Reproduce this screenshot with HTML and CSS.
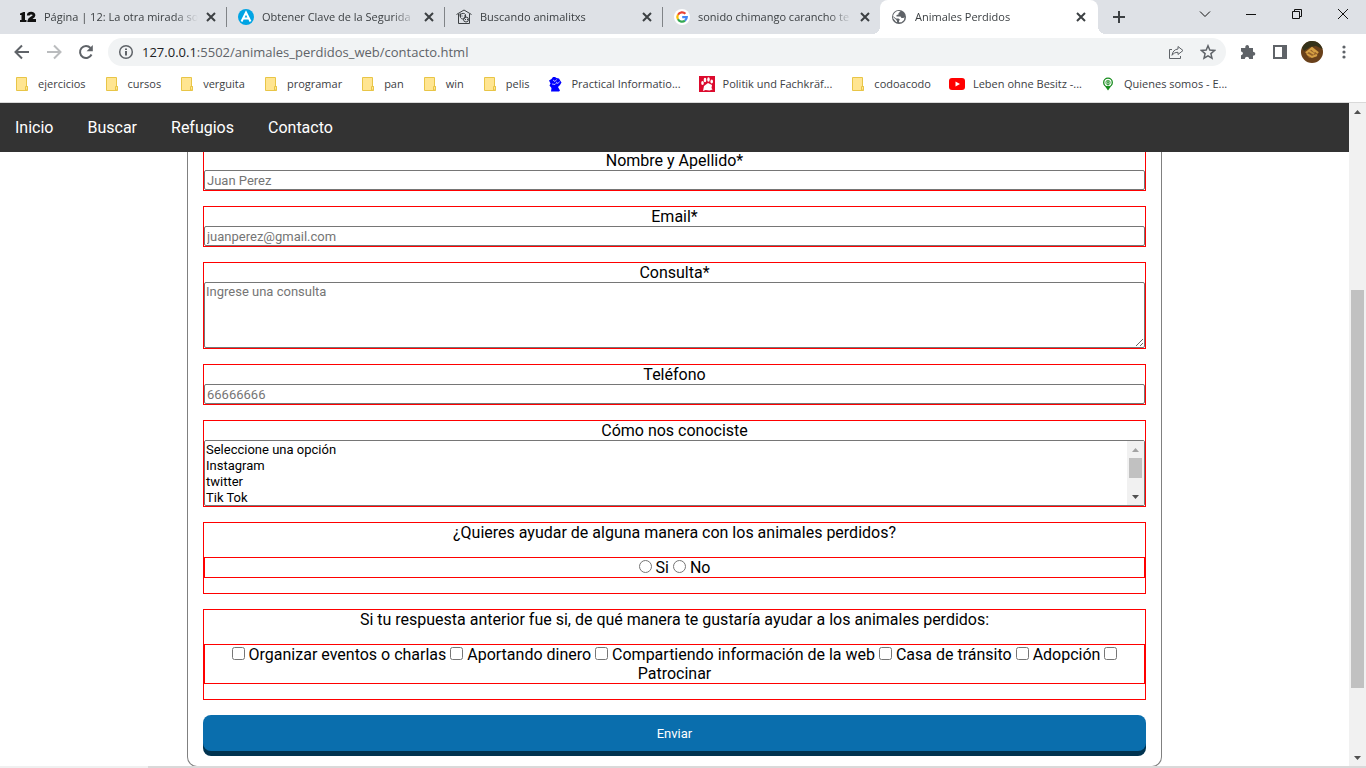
FILE: index.html
```html
<!DOCTYPE html>
<html lang="es">
<head>
<meta charset="utf-8">
<title>Animales Perdidos</title>
<link rel="stylesheet" href="styles.css">
</head>
<body>
<header class="browser">
  <div class="tabstrip">
    <div class="tab">
      <svg class="favicon" viewBox="0 0 16 16"><path fill="#111" d="M0 4.500 3.500 3H5v8h1.500v2H0v-2h1.500V6H0z"/><path fill="none" stroke="#111" stroke-width="2.800" d="M8.300 6.500c0-3 5.700-3 5.700-.3 0 2.300-4.500 2.600-5 5.300h7"/></svg>
      <button class="tab-title">Página | 12: La otra mirada so</button>
      <button class="tab-close" aria-label="Cerrar"><svg viewBox="0 0 10 10"><path d="m1 1 8 8M9 1 1 9"/></svg></button>
    </div>
    <div class="tab">
      <svg class="favicon" viewBox="0 0 16 16"><circle cx="8" cy="8" r="8" fill="#00a4e4"/><path fill="none" stroke="#fff" stroke-width="2" d="M3.500 12.500 8 3.500l4.500 9M5.500 9.500h5"/></svg>
      <button class="tab-title">Obtener Clave de la Segurida</button>
      <button class="tab-close" aria-label="Cerrar"><svg viewBox="0 0 10 10"><path d="m1 1 8 8M9 1 1 9"/></svg></button>
    </div>
    <div class="tab">
      <svg class="favicon" viewBox="0 0 16 16"><g fill="none" stroke="#3c4043"><path d="M.5 5.500 8 1l7.500 4.500M2.500 5v9.500h11V5"/><path d="M4.500 5.500c1.500-1.500 4-1.500 5 0v3c-1 2-4 2-5 0z"/><circle cx="10" cy="10.500" r="2.500"/></g><path fill="#3c4043" d="M5.500 6.500h1v1h-1zM8 6.500h1v1H8zM9 10h1v1H9zM11 10h1v1h-1zM3.500 4.500h1.500v3H3.500z"/></svg>
      <button class="tab-title">Buscando animalitxs</button>
      <button class="tab-close" aria-label="Cerrar"><svg viewBox="0 0 10 10"><path d="m1 1 8 8M9 1 1 9"/></svg></button>
    </div>
    <div class="tab tab-last">
      <svg class="favicon" viewBox="0 0 16 16"><circle cx="8" cy="8" r="8" fill="#fff"/><g fill="none" stroke-width="2.200"><path stroke="#ea4335" d="M4 5.700A4.700 4.700 0 0 1 11.400 4.800"/><path stroke="#fbbc05" d="M4 5.600a4.700 4.700 0 0 0 0 4.800"/><path stroke="#34a853" d="M4 10.300a4.700 4.700 0 0 0 7 1.400"/><path stroke="#4285f4" d="M8.200 8.100h4.600a4.700 4.700 0 0 1-1.800 3.600"/></g></svg>
      <button class="tab-title">sonido chimango carancho te</button>
      <button class="tab-close" aria-label="Cerrar"><svg viewBox="0 0 10 10"><path d="m1 1 8 8M9 1 1 9"/></svg></button>
    </div>
    <div class="tab tab-active">
      <svg class="favicon" viewBox="0 0 16 16"><circle cx="8" cy="8" r="7" fill="#5f6368"/><path fill="#fff" d="M9.500 2.500 7.500 4v1.500L5.500 6v1.500h4l1 1.500h2l1-1-.5 3-2.500 2.300H8v-1.500l1-1L7.500 9.500H5L2.300 7.200l-.2 2 3 3.800h1L5.500 11 3.200 9 2 7.500C2.500 4 5 2 8 2z"/></svg>
      <button class="tab-title">Animales Perdidos</button>
      <button class="tab-close" aria-label="Cerrar"><svg viewBox="0 0 10 10"><path d="m1 1 8 8M9 1 1 9"/></svg></button>
    </div>
    <button class="new-tab" aria-label="Nueva pestaña"><svg viewBox="0 0 12 12"><path d="M6 0v12M0 6h12"/></svg></button>
    <div class="window-controls">
      <button aria-label="Buscar pestañas"><svg viewBox="0 0 12 12"><path d="m1 3.500 5 5 5-5"/></svg></button>
      <button aria-label="Minimizar"><svg viewBox="0 0 12 12"><path d="M1 6.500h10"/></svg></button>
      <button aria-label="Restaurar"><svg viewBox="0 0 12 12"><path d="M1.500 3.500h7v7h-7zM3.500 3V1.500h7v7H9"/></svg></button>
      <button aria-label="Cerrar ventana"><svg viewBox="0 0 12 12"><path d="m1 1 10 10M11 1 1 11"/></svg></button>
    </div>
  </div>
  <div class="toolbar">
    <button class="tool" aria-label="Atrás"><svg viewBox="0 0 16 16"><path d="M15 8H2M8 1.500 1.500 8 8 14.500"/></svg></button>
    <button class="tool tool-off" aria-label="Adelante"><svg viewBox="0 0 16 16"><path d="M1 8h13M8 1.500 14.500 8 8 14.500"/></svg></button>
    <button class="tool" aria-label="Recargar"><svg viewBox="0 0 16 16"><path d="M13.500 10.500A6 6 0 1 1 12.500 4"/><path class="fill" d="M14.800 1v6.200H8.600z"/></svg></button>
    <div class="omnibox">
      <svg class="info" viewBox="0 0 16 16"><circle cx="8" cy="8" r="6.300"/><path d="M8 7v4.500M8 4.500V6"/></svg>
      <a class="url" href="#"><span class="host">127.0.0.1</span>:5502/animales_perdidos_web/contacto.html</a>
      <button class="inner-tool" aria-label="Compartir"><svg viewBox="0 0 16 16"><path d="M4 5.500H1.500v9h11V12M10 2.500l5 4-5 4V8.300c-3 0-4.500 1-6 3 .5-3.500 2.500-6 6-6.300z"/></svg></button>
      <button class="inner-tool" aria-label="Favorito"><svg viewBox="0 0 16 16"><path d="m8 1.800 1.800 4.300 4.700.4-3.600 3.100 1.100 4.600L8 11.800l-4 2.400 1.100-4.600L1.500 6.500l4.700-.4z" stroke-width="1.500"/></svg></button>
    </div>
    <button class="tool" aria-label="Extensiones"><svg viewBox="0 0 16 16"><path class="fill" d="M1 4h4.300c-.6-4 4.400-4 3.800 0H13v3.800c3 0 3 4 0 4V15H9.200c-.3-3-4.100-3-4.400 0H1v-3.800c2.600-.3 2.600-3.500 0-3.800z"/></svg></button>
    <button class="tool" aria-label="Panel lateral"><svg viewBox="0 0 16 16"><path class="fill" d="M1 1h14v14H1zM3 3v10h7V3z" fill-rule="evenodd"/></svg></button>
    <button class="tool" aria-label="Perfil"><svg class="avatar" viewBox="0 0 22 22"><circle cx="11" cy="11" r="11" fill="#69401a"/><path fill="#34321a" d="M1 7C4 1 8 0 11 0c5 0 9 3 10.500 8L15 5 9 6 3 10z"/><path fill="#95602a" d="m4 11 7-5 7 5-3 5-7 1z"/><path fill="none" stroke="#d5a044" d="m5 12 6-5 6 5M6 13l5 3 5-2M8 10l5 3M11 8l3 3"/></svg></button>
    <button class="tool" aria-label="Menú"><svg viewBox="0 0 16 16"><g class="fill"><circle cx="8" cy="3" r="1.600"/><circle cx="8" cy="8" r="1.600"/><circle cx="8" cy="13" r="1.600"/></g></svg></button>
  </div>
  <nav class="bookmarks" aria-label="Marcadores">
    <a href="#"><svg viewBox="0 0 16 16"><path class="folder" d="M2.500 1.500h10v9h1v4h-11z"/><path class="folder" d="M11.500 14v-3.500h2V14z"/></svg>ejercicios</a>
    <a href="#"><svg viewBox="0 0 16 16"><path class="folder" d="M2.500 1.500h10v9h1v4h-11z"/><path class="folder" d="M11.500 14v-3.500h2V14z"/></svg>cursos</a>
    <a href="#"><svg viewBox="0 0 16 16"><path class="folder" d="M2.500 1.500h10v9h1v4h-11z"/><path class="folder" d="M11.500 14v-3.500h2V14z"/></svg>verguita</a>
    <a href="#"><svg viewBox="0 0 16 16"><path class="folder" d="M2.500 1.500h10v9h1v4h-11z"/><path class="folder" d="M11.500 14v-3.500h2V14z"/></svg>programar</a>
    <a href="#"><svg viewBox="0 0 16 16"><path class="folder" d="M2.500 1.500h10v9h1v4h-11z"/><path class="folder" d="M11.500 14v-3.500h2V14z"/></svg>pan</a>
    <a href="#"><svg viewBox="0 0 16 16"><path class="folder" d="M2.500 1.500h10v9h1v4h-11z"/><path class="folder" d="M11.500 14v-3.500h2V14z"/></svg>win</a>
    <a href="#"><svg viewBox="0 0 16 16"><path class="folder" d="M2.500 1.500h10v9h1v4h-11z"/><path class="folder" d="M11.500 14v-3.500h2V14z"/></svg>pelis</a>
    <a href="#"><svg viewBox="0 0 16 16"><path fill="#00f" d="M2 4.500 4.500 3 6 1h2l1.500 1L12 2.500 13.500 5l1 1.500L13 9l-2 2 2 3.500-1 1H4L4.500 12 2.500 9.500l1-2z"/><path fill="none" stroke="#fff" stroke-width=".7" d="m6 4 2 1.500 1.500-2M9 6l2 1.500 1.500-2M5 8l3 .5L9.500 7"/></svg>Practical Informatio...</a>
    <a href="#"><svg viewBox="0 0 16 16"><path fill="#dc0a2d" d="M0 0h16v16H0z"/><g fill="#fff"><ellipse cx="3.500" cy="7" rx="1.300" ry="2"/><ellipse cx="6" cy="4" rx="1.300" ry="2.200"/><ellipse cx="9.500" cy="3.500" rx="1.300" ry="2.200"/><ellipse cx="12.700" cy="5.500" rx="1.300" ry="2"/><path d="m5 10 4-3 4 2-.5 3 1 1.500-3 1-4-.5L4 15z"/></g></svg>Politik und Fachkräf...</a>
    <a href="#"><svg viewBox="0 0 16 16"><path class="folder" d="M2.500 1.500h10v9h1v4h-11z"/><path class="folder" d="M11.500 14v-3.500h2V14z"/></svg>codoacodo</a>
    <a href="#"><svg viewBox="0 0 16 16"><rect y="2" width="16" height="12" rx="3" fill="red"/><path fill="#fff" d="m6.500 5.500 4.500 2.500-4.500 2.500z"/></svg>Leben ohne Besitz -...</a>
    <a href="#"><svg viewBox="0 0 16 16"><circle cx="8" cy="6.500" r="4.300" fill="#fff" stroke="#168c1c" stroke-width="1.300"/><path fill="#168c1c" d="M5 10.200h6L8 14.500z"/><circle cx="8" cy="6.500" r="2.200" fill="none" stroke="#58a95b"/><path stroke="#168c1c" d="M8 5.500v4M6.500 6h3"/></svg>Quienes somos - E...</a>
  </nav>
</header>

<div class="viewport">
  <div class="page">
    <nav class="site-nav">
      <a href="#">Inicio</a>
      <a href="#">Buscar</a>
      <a href="#">Refugios</a>
      <a href="#">Contacto</a>
    </nav>
    <form class="contact">
      <div class="field">
        <label for="nombre">Nombre y Apellido*</label>
        <input class="control" id="nombre" type="text" placeholder="Juan Perez">
      </div>
      <div class="field">
        <label for="email">Email*</label>
        <input class="control" id="email" type="email" placeholder="juanperez@gmail.com">
      </div>
      <div class="field">
        <label for="consulta">Consulta*</label>
        <textarea class="control area" id="consulta" placeholder="Ingrese una consulta"></textarea>
      </div>
      <div class="field">
        <label for="telefono">Teléfono</label>
        <input class="control" id="telefono" type="tel" placeholder="66666666">
      </div>
      <div class="field">
        <label for="origen">Cómo nos conociste</label>
        <div class="listbox">
          <select id="origen" size="4">
            <option>Seleccione una opción</option>
            <option>Instagram</option>
            <option>twitter</option>
            <option>Tik Tok</option>
            <option>Facebook</option>
            <option>Otro</option>
          </select>
          <div class="scrollbar" aria-hidden="true">
            <svg class="arrow arrow-off" viewBox="0 0 17 17"><path d="M5 11h7L8.500 7z"/></svg>
            <div class="track"><div class="thumb thumb-list"></div></div>
            <svg class="arrow" viewBox="0 0 17 17"><path d="M5 7h7l-3.500 4z"/></svg>
          </div>
        </div>
      </div>
      <div class="field question" role="group" aria-labelledby="q-ayuda">
        <p id="q-ayuda">¿Quieres ayudar de alguna manera con los animales perdidos?</p>
        <div class="choices">
          <input type="radio" name="ayuda" id="si"> <label for="si">Si</label>
          <input type="radio" name="ayuda" id="no"> <label for="no">No</label>
        </div>
      </div>
      <div class="field question" role="group" aria-labelledby="q-manera">
        <p id="q-manera">Si tu respuesta anterior fue si, de qué manera te gustaría ayudar a los animales perdidos:</p>
        <div class="choices">
          <input type="checkbox" id="eventos"> <label for="eventos">Organizar eventos o charlas</label>
          <input type="checkbox" id="dinero"> <label for="dinero">Aportando dinero</label>
          <input type="checkbox" id="compartir"> <label for="compartir">Compartiendo información de la web</label>
          <input type="checkbox" id="transito"> <label for="transito">Casa de tránsito</label>
          <input type="checkbox" id="adopcion"> <label for="adopcion">Adopción</label>
          <input type="checkbox" id="patrocinar"> <label for="patrocinar">Patrocinar</label>
        </div>
      </div>
      <button class="submit" type="submit">Enviar</button>
    </form>
  </div>
  <div class="scrollbar" aria-hidden="true">
    <svg class="arrow" viewBox="0 0 17 17"><path d="M5 11h7L8.500 7z"/></svg>
    <div class="track"><div class="thumb thumb-page"></div></div>
    <svg class="arrow" viewBox="0 0 17 17"><path d="M5 7h7l-3.500 4z"/></svg>
  </div>
</div>
<div class="status-edge"><div class="status-start"></div></div>
</body>
</html>
```
FILE: styles.css
```css
* { box-sizing: border-box; margin: 0; padding: 0; }

body {
  display: flex;
  flex-direction: column;
  height: 100vh;
  overflow: hidden;
  background: #fff;
  color: #000;
  font: 16px/19px Roboto, sans-serif;
}

button { border: 0; background: none; font: inherit; color: inherit; }
a { color: inherit; text-decoration: none; }
svg { display: block; flex: none; }

/* Browser frame */
.browser {
  flex: none;
  border-bottom: 1px solid #d9d9d9;
  color: #3c4043;
  font: 11px/16px "Open Sans", "Noto Sans", sans-serif;
}

.tabstrip {
  display: flex;
  height: 34px;
  padding-left: 8px;
  background: #dee1e6;
}
.tab {
  position: relative;
  display: flex;
  align-items: center;
  gap: 8px;
  flex: 0 1 218px;
  min-width: 0;
  padding: 0 10px 0 12px;
}
.tab:not(.tab-active):not(.tab-last)::after {
  content: "";
  position: absolute;
  right: -1px;
  top: 7px;
  width: 1px;
  height: 20px;
  background: #808387;
}
.tab-active {
  padding: 0 12px 0 11px;
  background: #fff;
  border-radius: 8px 8px 0 0;
}
.tab-active::before, .tab-active::after {
  content: "";
  position: absolute;
  bottom: 0;
  width: 8px;
  height: 8px;
}
.tab-active::before { left: -8px; background: radial-gradient(circle at 0 0, #dee1e6 8px, #fff 8px); }
.tab-active::after { right: -8px; background: radial-gradient(circle at 100% 0, #dee1e6 8px, #fff 8px); }
.favicon { width: 16px; height: 16px; }
.tab-title {
  flex: 1;
  min-width: 0;
  overflow: hidden;
  white-space: nowrap;
  text-align: left;
  mask-image: linear-gradient(to right, #000 calc(100% - 24px), transparent);
}
.tab-close svg { width: 10px; height: 10px; }
.tab-close path { stroke: #3c4043; stroke-width: 2; }
.new-tab { padding: 0 15px; }
.new-tab svg { width: 12px; height: 12px; stroke: #3c4043; stroke-width: 2; }
.window-controls { display: flex; align-items: flex-start; margin-left: auto; }
.window-controls button { display: flex; justify-content: center; width: 46px; padding-top: 8px; }
.window-controls svg { width: 12px; height: 12px; fill: none; stroke: #111; }

.toolbar {
  display: flex;
  align-items: center;
  height: 36px;
  padding: 0 6px;
}
.tool { display: flex; align-items: center; justify-content: center; width: 32px; height: 28px; }
.tool svg { width: 16px; height: 16px; fill: none; stroke: #5f6368; stroke-width: 2; }
.tool .fill { fill: #5f6368; stroke: none; }
.tool-off svg { stroke: #babcbe; }
.tool .avatar { width: 22px; height: 22px; stroke: none; }
.omnibox {
  display: flex;
  align-items: center;
  flex: 1;
  height: 28px;
  margin: 0 6px;
  padding: 0 2px 0 10px;
  border-radius: 14px;
  background: #f1f3f4;
}
.info { width: 16px; height: 16px; margin-right: 8px; fill: none; stroke: #5f6368; stroke-width: 2; }
.info circle { stroke-width: 1.500; }
.url { flex: 1; color: #5f6368; font-size: 13px; }
.host { color: #202124; }
.inner-tool { display: flex; justify-content: center; width: 32px; }
.inner-tool svg { width: 16px; height: 16px; fill: none; stroke: #5f6368; }

.bookmarks {
  display: flex;
  align-items: center;
  gap: 18px;
  height: 32px;
  padding: 0 14px 4px;
  white-space: nowrap;
}
.bookmarks a { display: flex; align-items: center; gap: 8px; }
.bookmarks svg { width: 16px; height: 16px; }
.folder { fill: #ffe591; stroke: #e8c547; }

/* Web page */
.viewport { display: flex; flex: 1; min-height: 0; }
.page {
  position: relative;
  flex: 1;
  min-width: 0;
  overflow: hidden;
  padding-top: 47px;
}
.site-nav {
  position: absolute;
  top: 0;
  left: 0;
  right: 0;
  display: flex;
  gap: 34px;
  padding: 15px;
  background: #333;
  color: #fff;
}
.contact {
  display: flex;
  flex-direction: column;
  gap: 15px;
  width: 90%;
  max-width: 975px;
  margin: 0 auto;
  padding: 0 15px 15px;
  border: 1px solid #808080;
  border-top: 0;
  border-radius: 0 0 10px 10px;
  text-align: center;
}
.field { display: flex; flex-direction: column; border: 1px solid #f00; }
.control {
  width: 100%;
  height: 20px;
  padding: 0 2px;
  border: 1px solid #767676;
  border-radius: 2px;
  background: #fff;
  font: 13px/16px Roboto, sans-serif;
}
.control::placeholder { color: #757575; }
.area { height: 66px; padding: 1px; }
.listbox { display: flex; height: 66px; border: 1px solid #767676; border-radius: 2px; }
.listbox select {
  flex: 1;
  min-width: 0;
  padding: 1px 0 0 1px;
  border: 0;
  outline: 0;
  background: #fff;
  color: #000;
  font: 13px/16px Roboto, sans-serif;
  scrollbar-width: none;
}
.listbox option { min-height: 16px; padding: 0; line-height: 16px; }
.question { gap: 15px; padding-bottom: 15px; }
.choices { border: 1px solid #f00; }
.choices input { width: 13px; height: 13px; }
.submit {
  height: 36px;
  padding-top: 2px;
  border-radius: 8px;
  background: #0a6ead;
  box-shadow: 0 5px #003350;
  color: #fff;
  font: 13px/16px Roboto, sans-serif;
}

.scrollbar { display: flex; flex-direction: column; flex: none; width: 17px; background: #f1f1f1; }
.arrow { width: 17px; height: 17px; fill: #505050; }
.arrow-off { fill: #a3a3a3; }
.track { flex: 1; min-height: 0; padding: 0 2px; }
.thumb { background: #c1c1c1; }
.thumb-list { height: 20px; }
.thumb-page { height: 398px; margin-top: 170px; }
.status-edge { flex: none; height: 2px; background: #d9d9d9; }
.status-start { width: 148px; height: 2px; background: #f0f0f0; }
```
